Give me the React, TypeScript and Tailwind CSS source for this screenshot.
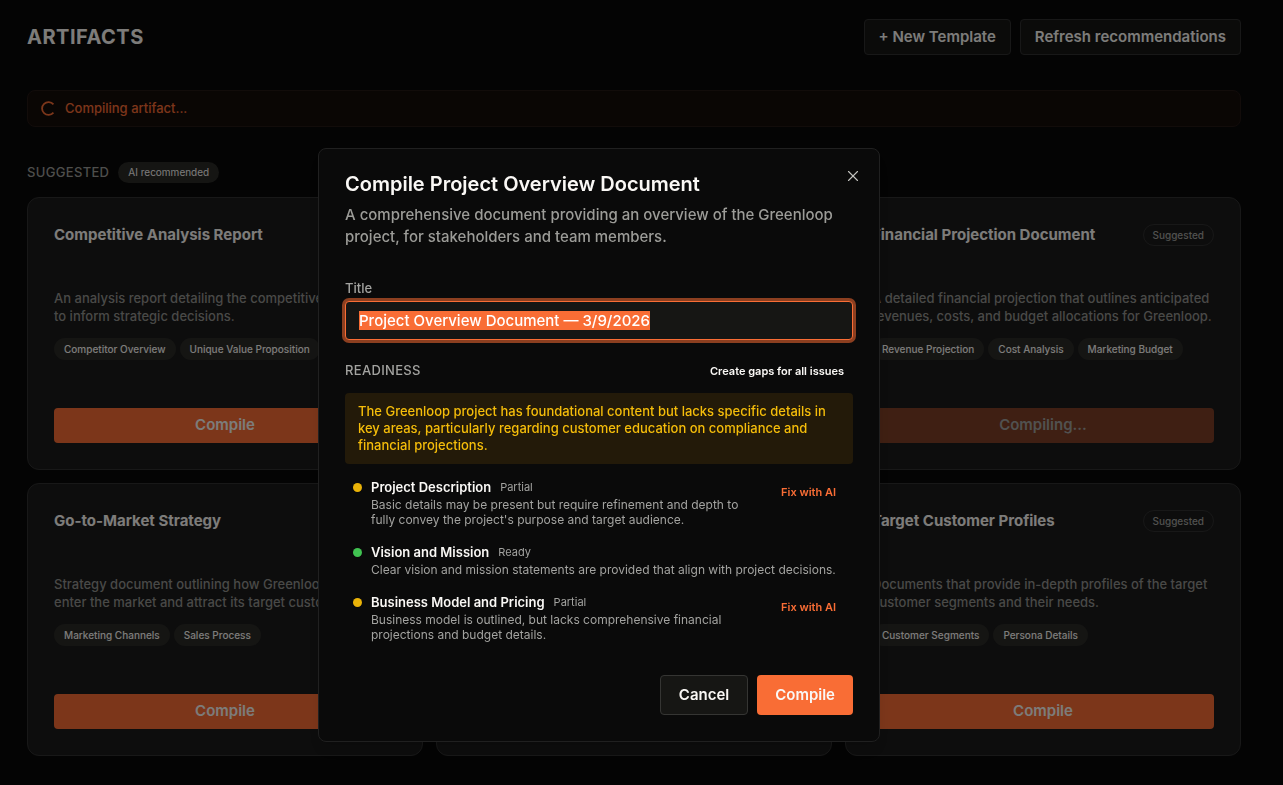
import React, { useEffect, useRef } from "react";
import { X } from "lucide-react";

type Artifact = {
  title: string;
  description: string;
  tags: string[];
  compiling?: boolean;
};

type ReadinessItem = {
  name: string;
  status: "Partial" | "Ready";
  note: string;
};

// null = slot fully covered by the open dialog
const artifacts: (Artifact | null)[] = [
  {
    title: "Competitive Analysis Report",
    description: "An analysis report detailing the competitive landscape to inform strategic decisions.",
    tags: ["Competitor Overview", "Unique Value Proposition"],
  },
  null,
  {
    title: "Financial Projection Document",
    description: "A detailed financial projection that outlines anticipated revenues, costs, and budget allocations for Greenloop.",
    tags: ["Revenue Projection", "Cost Analysis", "Marketing Budget"],
    compiling: true,
  },
  {
    title: "Go-to-Market Strategy",
    description: "Strategy document outlining how Greenloop plans to enter the market and attract its target customers.",
    tags: ["Marketing Channels", "Sales Process"],
  },
  null,
  {
    title: "Target Customer Profiles",
    description: "Documents that provide in-depth profiles of the target customer segments and their needs.",
    tags: ["Customer Segments", "Persona Details"],
  },
];

const readiness: ReadinessItem[] = [
  {
    name: "Project Description",
    status: "Partial",
    note: "Basic details may be present but require refinement and depth to fully convey the project's purpose and target audience.",
  },
  {
    name: "Vision and Mission",
    status: "Ready",
    note: "Clear vision and mission statements are provided that align with project decisions.",
  },
  {
    name: "Business Model and Pricing",
    status: "Partial",
    note: "Business model is outlined, but lacks comprehensive financial projections and budget details.",
  },
];

function ArtifactCard({ artifact }: { artifact: Artifact | null }) {
  if (!artifact) {
    return <div className="rounded-xl border border-[#303030] bg-[#1a1a1a]" />;
  }

  return (
    <article className="flex min-h-[273px] flex-col rounded-xl border border-[#303030] bg-[#1a1a1a] p-[26px]">
      <div className="flex h-[62px] items-start justify-between gap-3">
        <h3 className="text-[15px] leading-[22px] font-bold">{artifact.title}</h3>
        <span className="shrink-0 rounded-full border border-[#303030] px-[9px] text-[10px] leading-5 font-medium text-[#a3a3a0]">
          Suggested
        </span>
      </div>
      <p className="mt-[3px] text-[13px] leading-[18px] font-medium text-[#93938f]">{artifact.description}</p>
      <div className="mt-[13px] flex flex-wrap gap-1">
        {artifact.tags.map((tag) => (
          <span key={tag} className="rounded-full bg-[#2a2a27] px-[10px] text-[10px] leading-[22px] font-medium">
            {tag}
          </span>
        ))}
      </div>
      <button
        type="button"
        disabled={artifact.compiling}
        className={`mt-auto h-[35px] w-full rounded text-[15px] font-semibold ${
          artifact.compiling ? "bg-[#f96d35]/45 text-[#a3a3a0]" : "bg-[#f96d35]"
        }`}
      >
        {artifact.compiling ? "Compiling..." : "Compile"}
      </button>
    </article>
  );
}

function CompileDialog() {
  const inputRef = useRef<HTMLInputElement>(null);

  useEffect(() => {
    inputRef.current?.focus();
    inputRef.current?.select();
  }, []);

  return (
    <div className="fixed inset-0 flex items-start justify-center bg-black/50 pt-[148px] pr-[85px]">
      <div
        role="dialog"
        aria-modal="true"
        aria-labelledby="dialog-title"
        className="relative w-full max-w-[562px] rounded-lg border border-[#202020] bg-[#0a0a0a] p-[26px] shadow-lg"
      >
        <button type="button" aria-label="Close" className="absolute top-[18px] right-[17px] text-[#c4c4c0]">
          <X className="size-[18px]" strokeWidth={1.5} />
        </button>

        <h2 id="dialog-title" className="text-xl leading-[18px] font-semibold">
          Compile Project Overview Document
        </h2>
        <p className="mt-[11px] text-[15px] leading-[22px] font-medium text-[#9c9c98]">
          A comprehensive document providing an overview of the Greenloop project, for stakeholders and team members.
        </p>

        <label htmlFor="artifact-title" className="mt-[31px] block text-[13px] leading-[18px] font-medium text-[#a3a3a0]">
          Title
        </label>
        <input
          id="artifact-title"
          ref={inputRef}
          type="text"
          defaultValue="Project Overview Document — 3/9/2026"
          className="mt-1 h-[39px] w-full rounded border border-[#f96d35] bg-[#161614] px-[13px] text-[15px] font-medium ring-3 ring-[#8c3f20] outline-none selection:bg-[#f96d35] selection:text-white"
        />

        <div className="mt-[19px] flex h-6 items-center justify-between">
          <h3 className="text-[13px] font-medium tracking-wide text-[#a3a3a0]">READINESS</h3>
          <button type="button" className="px-[9px] text-[11px] font-semibold">
            Create gaps for all issues
          </button>
        </div>

        <p className="mt-[10px] rounded bg-[#231a09] px-[13px] py-[10px] text-[13px] leading-[17px] font-medium text-[#f5bd0a]">
          The Greenloop project has foundational content but lacks specific details in key areas, particularly
          regarding customer education on compliance and financial projections.
        </p>

        <ul className="mt-[13px] flex flex-col gap-[15px] pr-2 pl-2">
          {readiness.map((item) => (
            <li key={item.name} className="flex items-start gap-[9px]">
              <span
                className={`mt-[6px] size-[9px] shrink-0 rounded-full ${
                  item.status === "Ready" ? "bg-[#40c351]" : "bg-[#eab308]"
                }`}
              />
              <div className="-mr-1 flex-1">
                <div className="flex items-center gap-[9px]">
                  <span className="text-[13px] leading-5 font-semibold">{item.name}</span>
                  <span className="text-[11px] leading-5 text-[#a3a3a0]">{item.status}</span>
                </div>
                <p className="text-xs leading-[15px] text-[#a3a3a0]">{item.note}</p>
              </div>
              {item.status === "Partial" && (
                <button type="button" className="ml-5 h-[30px] shrink-0 px-[9px] text-[11px] font-semibold text-[#f96d35]">
                  Fix with AI
                </button>
              )}
            </li>
          ))}
        </ul>

        <div className="mt-[33px] flex justify-end gap-[9px]">
          <button
            type="button"
            className="h-10 rounded border border-[#353533] bg-[#161614] px-[18px] text-[15px] font-semibold"
          >
            Cancel
          </button>
          <button type="button" className="h-10 rounded bg-[#f96d35] px-[18px] text-[15px] font-semibold">
            Compile
          </button>
        </div>
      </div>
    </div>
  );
}

export default function App() {
  return (
    <div className="min-h-screen bg-[#080808] font-[Inter,sans-serif] text-[#faf8f5]">
      <main className="pt-[19px] pr-[42px] pb-[29px] pl-[27px]">
        <header className="flex items-center justify-between">
          <h1 className="text-xl font-bold tracking-wide">ARTIFACTS</h1>
          <div className="flex gap-[9px]">
            <button
              type="button"
              className="h-9 rounded border border-[#303030] bg-[#161614] px-[14px] text-[15px] font-semibold"
            >
              + New Template
            </button>
            <button
              type="button"
              className="h-9 rounded border border-[#303030] bg-[#161614] px-[14px] text-[15px] font-semibold"
            >
              Refresh recommendations
            </button>
          </div>
        </header>

        <div
          role="status"
          className="mt-[35px] flex h-[37px] items-center gap-[9px] rounded-lg border border-[#241815] bg-[#150c09] px-[13px] text-[13px] font-medium text-[#f96d35]"
        >
          <svg viewBox="0 0 14 14" className="size-[15px]" fill="none" stroke="currentColor" strokeWidth="1.7">
            <path d="M11.6 3.14 A6 6 0 1 0 11.6 10.86" />
          </svg>
          Compiling artifact...
        </div>

        <section>
          <div className="mt-[35px] mb-[14px] flex items-center gap-[9px]">
            <h2 className="text-[13px] font-medium tracking-wide text-[#9c9c98]">SUGGESTED</h2>
            <span className="rounded-full bg-[#2a2a27] px-[10px] text-[10px] leading-[21px]">AI recommended</span>
          </div>
          <div className="grid grid-cols-3 gap-[13px]">
            {artifacts.map((artifact, i) => (
              <ArtifactCard key={i} artifact={artifact} />
            ))}
          </div>
        </section>
      </main>
      <CompileDialog />
    </div>
  );
}
